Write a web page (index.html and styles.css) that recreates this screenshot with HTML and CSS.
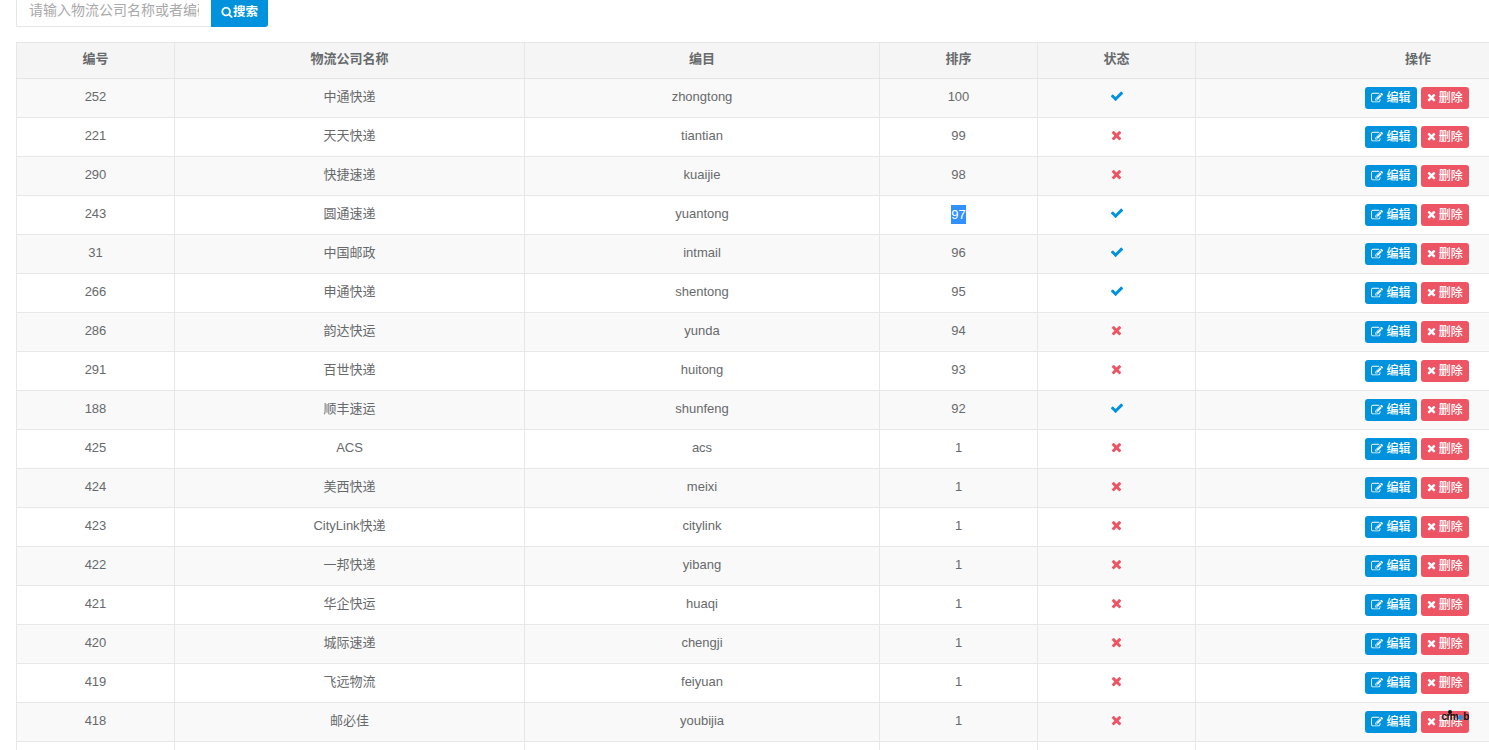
FILE: index.html
```html
<!DOCTYPE html>
<html lang="zh-CN">
<head>
<meta charset="utf-8">
<title>物流公司</title>
<link rel="stylesheet" href="styles.css">
</head>
<body>
<svg class="defs" width="0" height="0" aria-hidden="true">
<symbol id="i-check" viewBox="0 0 1792 1792"><path d="M1671 566q0 40-28 68l-724 724-136 136q-28 28-68 28t-68-28l-136-136-362-362q-28-28-28-68t28-68l136-136q28-28 68-28t68 28l294 295 656-657q28-28 68-28t68 28l136 136q28 28 28 68z"/></symbol>
<symbol id="i-times" viewBox="0 0 1408 1792"><path d="M1298 1214q0 40-28 68l-136 136q-28 28-68 28t-68-28l-294-294-294 294q-28 28-68 28t-68-28l-136-136q-28-28-28-68t28-68l294-294-294-294q-28-28-28-68t28-68l136-136q28-28 68-28t68 28l294 294 294-294q28-28 68-28t68 28l136 136q28 28 28 68t-28 68l-294 294 294 294q28 28 28 68z"/></symbol>
<symbol id="i-search" viewBox="0 0 1792 1792"><path d="M1216 832q0-185-131.500-316.500t-316.500-131.500-316.500 131.500-131.500 316.500 131.500 316.500 316.500 131.500 316.500-131.500 131.500-316.500zm512 832q0 52-38 90t-90 38q-54 0-90-38l-343-342q-179 124-399 124-143 0-273.500-55.500t-225-150-150-225-55.500-273.500 55.500-273.500 150-225 225-150 273.500-55.500 273.500 55.500 225 150 150 225 55.500 273.500q0 220-124 399l343 343q37 37 37 90z"/></symbol>
<symbol id="i-edit" viewBox="0 0 1792 1792"><path d="M888 1184l116-116-152-152-116 116v56h96v96h56zm440-720q-16-16-33 1l-350 350q-17 17-1 33t33-1l350-350q17-17 1-33zm80 594v190q0 119-84.500 203.500t-203.500 84.500h-832q-119 0-203.500-84.500t-84.500-203.500v-832q0-119 84.500-203.500t203.500-84.500h832q63 0 117 25 15 7 18 23 3 17-9 29l-49 49q-14 14-32 8-23-6-45-6h-832q-66 0-113 47t-47 113v832q0 66 47 113t113 47h832q66 0 113-47t47-113v-126q0-13 9-22l64-64q15-15 35-7t20 29zm-96-738l288 288-672 672h-288v-288zm444 132l-92 92-288-288 92-92q28-28 68-28t68 28l152 152q28 28 28 68t-28 68z"/></symbol>
</svg>
<main class="page">
<form class="search">
<input class="search-input" type="text" placeholder="请输入物流公司名称或者编码">
<button class="search-btn" type="button"><svg class="ico"><use href="#i-search"/></svg>搜索</button>
</form>
<table class="grid">
<colgroup><col class="c1"><col class="c2"><col class="c3"><col class="c1"><col class="c1"><col class="c6"></colgroup>
<thead><tr><th>编号</th><th>物流公司名称</th><th>编目</th><th>排序</th><th>状态</th><th>操作</th></tr></thead>
<tbody>
<tr><td>252</td><td>中通快递</td><td>zhongtong</td><td>100</td><td><svg class="state on"><use href="#i-check"/></svg></td><td><a class="btn blue"><svg class="ico"><use href="#i-edit"/></svg> 编辑</a><a class="btn red"><svg class="ico-x"><use href="#i-times"/></svg> 删除</a></td></tr>
<tr><td>221</td><td>天天快递</td><td>tiantian</td><td>99</td><td><svg class="state off"><use href="#i-times"/></svg></td><td><a class="btn blue"><svg class="ico"><use href="#i-edit"/></svg> 编辑</a><a class="btn red"><svg class="ico-x"><use href="#i-times"/></svg> 删除</a></td></tr>
<tr><td>290</td><td>快捷速递</td><td>kuaijie</td><td>98</td><td><svg class="state off"><use href="#i-times"/></svg></td><td><a class="btn blue"><svg class="ico"><use href="#i-edit"/></svg> 编辑</a><a class="btn red"><svg class="ico-x"><use href="#i-times"/></svg> 删除</a></td></tr>
<tr><td>243</td><td>圆通速递</td><td>yuantong</td><td><span class="selected">97</span></td><td><svg class="state on"><use href="#i-check"/></svg></td><td><a class="btn blue"><svg class="ico"><use href="#i-edit"/></svg> 编辑</a><a class="btn red"><svg class="ico-x"><use href="#i-times"/></svg> 删除</a></td></tr>
<tr><td>31</td><td>中国邮政</td><td>intmail</td><td>96</td><td><svg class="state on"><use href="#i-check"/></svg></td><td><a class="btn blue"><svg class="ico"><use href="#i-edit"/></svg> 编辑</a><a class="btn red"><svg class="ico-x"><use href="#i-times"/></svg> 删除</a></td></tr>
<tr><td>266</td><td>申通快递</td><td>shentong</td><td>95</td><td><svg class="state on"><use href="#i-check"/></svg></td><td><a class="btn blue"><svg class="ico"><use href="#i-edit"/></svg> 编辑</a><a class="btn red"><svg class="ico-x"><use href="#i-times"/></svg> 删除</a></td></tr>
<tr><td>286</td><td>韵达快运</td><td>yunda</td><td>94</td><td><svg class="state off"><use href="#i-times"/></svg></td><td><a class="btn blue"><svg class="ico"><use href="#i-edit"/></svg> 编辑</a><a class="btn red"><svg class="ico-x"><use href="#i-times"/></svg> 删除</a></td></tr>
<tr><td>291</td><td>百世快递</td><td>huitong</td><td>93</td><td><svg class="state off"><use href="#i-times"/></svg></td><td><a class="btn blue"><svg class="ico"><use href="#i-edit"/></svg> 编辑</a><a class="btn red"><svg class="ico-x"><use href="#i-times"/></svg> 删除</a></td></tr>
<tr><td>188</td><td>顺丰速运</td><td>shunfeng</td><td>92</td><td><svg class="state on"><use href="#i-check"/></svg></td><td><a class="btn blue"><svg class="ico"><use href="#i-edit"/></svg> 编辑</a><a class="btn red"><svg class="ico-x"><use href="#i-times"/></svg> 删除</a></td></tr>
<tr><td>425</td><td>ACS</td><td>acs</td><td>1</td><td><svg class="state off"><use href="#i-times"/></svg></td><td><a class="btn blue"><svg class="ico"><use href="#i-edit"/></svg> 编辑</a><a class="btn red"><svg class="ico-x"><use href="#i-times"/></svg> 删除</a></td></tr>
<tr><td>424</td><td>美西快递</td><td>meixi</td><td>1</td><td><svg class="state off"><use href="#i-times"/></svg></td><td><a class="btn blue"><svg class="ico"><use href="#i-edit"/></svg> 编辑</a><a class="btn red"><svg class="ico-x"><use href="#i-times"/></svg> 删除</a></td></tr>
<tr><td>423</td><td>CityLink快递</td><td>citylink</td><td>1</td><td><svg class="state off"><use href="#i-times"/></svg></td><td><a class="btn blue"><svg class="ico"><use href="#i-edit"/></svg> 编辑</a><a class="btn red"><svg class="ico-x"><use href="#i-times"/></svg> 删除</a></td></tr>
<tr><td>422</td><td>一邦快递</td><td>yibang</td><td>1</td><td><svg class="state off"><use href="#i-times"/></svg></td><td><a class="btn blue"><svg class="ico"><use href="#i-edit"/></svg> 编辑</a><a class="btn red"><svg class="ico-x"><use href="#i-times"/></svg> 删除</a></td></tr>
<tr><td>421</td><td>华企快运</td><td>huaqi</td><td>1</td><td><svg class="state off"><use href="#i-times"/></svg></td><td><a class="btn blue"><svg class="ico"><use href="#i-edit"/></svg> 编辑</a><a class="btn red"><svg class="ico-x"><use href="#i-times"/></svg> 删除</a></td></tr>
<tr><td>420</td><td>城际速递</td><td>chengji</td><td>1</td><td><svg class="state off"><use href="#i-times"/></svg></td><td><a class="btn blue"><svg class="ico"><use href="#i-edit"/></svg> 编辑</a><a class="btn red"><svg class="ico-x"><use href="#i-times"/></svg> 删除</a></td></tr>
<tr><td>419</td><td>飞远物流</td><td>feiyuan</td><td>1</td><td><svg class="state off"><use href="#i-times"/></svg></td><td><a class="btn blue"><svg class="ico"><use href="#i-edit"/></svg> 编辑</a><a class="btn red"><svg class="ico-x"><use href="#i-times"/></svg> 删除</a></td></tr>
<tr><td>418</td><td>邮必佳</td><td>youbijia</td><td>1</td><td><svg class="state off"><use href="#i-times"/></svg></td><td><a class="btn blue"><svg class="ico"><use href="#i-edit"/></svg> 编辑</a><a class="btn red mark-host"><svg class="ico-x"><use href="#i-times"/></svg> 删除<span class="mark">crm<i class="mark-dot"></i>b<i class="mark-head"></i></span></a></td></tr>
<tr><td></td><td></td><td></td><td></td><td></td><td></td></tr>
</tbody>
</table>
</main>
</body>
</html>
```
FILE: styles.css
```css
* { box-sizing: border-box; }
html, body { margin: 0; height: 750px; overflow: hidden; background: #fff; }
body { font-family: "Liberation Sans", "Noto Sans CJK SC", sans-serif; font-size: 13px; line-height: 18px; color: #676a6c; }
.defs { display: block; height: 0; }
.page { padding-left: 16px; width: 1640px; }

.search { display: flex; align-items: flex-end; height: 27px; overflow: hidden; margin-bottom: 15px; }
.search-input { flex: none; width: 195px; height: 34px; padding: 6px 12px; border: 1px solid #e5e6e7; border-right: 0; outline: 0; background: #fff; font: inherit; font-size: 14px; color: #676a6c; }
.search-input::placeholder { color: #a9a9a9; opacity: 1; }
.search-btn { flex: none; display: flex; align-items: center; justify-content: center; width: 57px; height: 34px; padding: 3px 0 0; border: 0; border-radius: 0 3px 3px 0; background: #0092dc; color: #fff; font: inherit; font-size: 12.5px; font-weight: 700; }
.search-btn .ico { width: 12px; height: 12px; }

.ico { width: 12px; height: 12px; fill: currentColor; vertical-align: -2px; }
.ico-x { width: 9px; height: 12px; fill: currentColor; vertical-align: -2px; }

.grid { table-layout: fixed; width: 1624px; border-collapse: collapse; }
.c1 { width: 158px; }
.c2 { width: 350px; }
.c3 { width: 355px; }
.c6 { width: 445px; }
.grid th, .grid td { border: 1px solid #e7e7e7; text-align: center; vertical-align: middle; padding: 0 8px 2px; }
.grid th { height: 36px; padding-bottom: 4px; background: #f5f5f5; font-weight: 700; border-bottom-color: #e4e4e4; }
.grid td { height: 39px; }
.grid td:last-child { padding-right: 10px; }
.grid tbody tr:nth-child(odd) { background: #f9f9f9; }

.selected { display: inline-block; line-height: 19px; background: #3390ff; color: #fff; }
.state { display: inline-block; width: 14px; height: 14px; vertical-align: -2px; }
.state.on { fill: #0092dc; }
.state.off { width: 11px; fill: #ed5565; vertical-align: -3px; }

.btn { display: inline-block; height: 22px; padding: 1px 5px; margin-top: 1px; border: 1px solid transparent; border-radius: 3px; color: #fff; font-size: 12px; font-weight: 500; line-height: 18px; white-space: nowrap; vertical-align: middle; }
.blue { background: #0092dc; }
.red { background: #ed5565; margin-left: 4px; }

.mark-host { position: relative; }
.mark { position: absolute; right: -1px; top: -1px; font-size: 10px; line-height: 11px; color: #111; font-weight: 700; letter-spacing: -0.5px; }
.mark-dot { display: inline-block; width: 5px; height: 5px; border-radius: 50%; background: #2a8fd6; }
.mark-head { position: absolute; left: 7px; top: -1px; width: 4px; height: 4px; border-radius: 50%; background: #111; }
```
